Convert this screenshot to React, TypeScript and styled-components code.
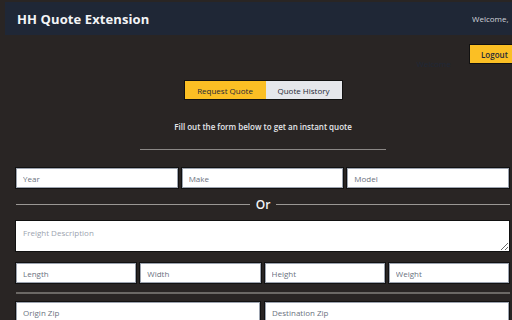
import React from "react";
import styled, { createGlobalStyle } from "styled-components";

const GlobalStyle = createGlobalStyle`
  html, body {
    margin: 0;
    padding: 0;
    background: #292524;
    overflow: hidden;
  }
  body {
    font-family: "Open Sans", "Liberation Sans", sans-serif;
  }
  * {
    box-sizing: border-box;
  }
`;

export default function App() {
  return (
    <>
      <GlobalStyle />
      <Page>
        <Header>
          <Title>HH Quote Extension</Title>
          <HeaderWelcome>Welcome,</HeaderWelcome>
        </Header>
        <TopBar>
          <GhostWelcome>Welcome</GhostWelcome>
          <LogoutButton>Logout</LogoutButton>
        </TopBar>

        <Tabs>
          <Tab active>Request Quote</Tab>
          <Tab>Quote History</Tab>
        </Tabs>

        <Intro>Fill out the form below to get an instant quote</Intro>
        <ShortRule />

        <Form>
          <Row cols={3}>
            <Field placeholder="Year" />
            <Field placeholder="Make" />
            <Field placeholder="Model" />
          </Row>

          <OrDivider>
            <Line />
            <OrText>Or</OrText>
            <Line />
          </OrDivider>

          <TextArea placeholder="Freight Description" />

          <Row cols={4} $top={10}>
            <Field placeholder="Length" />
            <Field placeholder="Width" />
            <Field placeholder="Height" />
            <Field placeholder="Weight" />
          </Row>

          <ThickRule />

          <Row cols={2} $gap={3}>
            <Field placeholder="Origin Zip" />
            <Field placeholder="Destination Zip" />
          </Row>
        </Form>
      </Page>
    </>
  );
}

const Page = styled.div`
  width: 512px;
  height: 320px;
  padding-top: 2px;
  overflow: hidden;
`;

const Header = styled.header`
  margin-left: 5px;
  height: 33px;
  background: #1f2736;
  display: flex;
  align-items: center;
  justify-content: space-between;
  padding-left: 12px;
  padding-right: 0;
`;

const Title = styled.h1`
  margin: 0;
  font-size: 13px;
  font-weight: 700;
  color: #f3f4f6;
  letter-spacing: 0.1px;
`;

const HeaderWelcome = styled.span`
  font-size: 8px;
  color: #d1d5db;
  width: 40px;
  white-space: nowrap;
  overflow: hidden;
`;

const TopBar = styled.div`
  height: 46px;
  display: flex;
  justify-content: flex-end;
  align-items: flex-start;
  padding-top: 9px;
`;

const GhostWelcome = styled.span`
  font-size: 8px;
  color: #1f2838;
  margin-top: 14px;
  margin-right: 18px;
`;

const LogoutButton = styled.button`
  width: 48px;
  height: 20px;
  background: #fbbf24;
  border: 1px solid #111;
  font-family: inherit;
  font-size: 8px;
  font-weight: 600;
  color: #1f2937;
  text-align: left;
  padding: 0 0 0 11px;
  margin-right: -5px;
`;

const Tabs = styled.div`
  margin: 0 auto;
  width: 159px;
  height: 20px;
  display: flex;
  border: 1px solid #111;
  transform: translate(7px, -1px);
`;

const Tab = styled.button<{ active?: boolean }>`
  flex: ${(p) => (p.active ? "0 0 81px" : "1")};
  border: none;
  background: ${(p) => (p.active ? "#fbbf24" : "#e5e7eb")};
  color: #1f2937;
  font-family: inherit;
  font-size: 8px;
  font-weight: 500;
  padding: 0;
`;

const Intro = styled.p`
  margin: 20px 0 0;
  text-align: center;
  padding-left: 14px;
  font-size: 8px;
  font-weight: 600;
  color: #e5e7eb;
`;

const ShortRule = styled.div`
  margin: 17px 0 0 140px;
  width: 246px;
  height: 1px;
  background: #8a8785;
`;

const Form = styled.div`
  padding: 17px 2px 0 15px;
`;

const Row = styled.div<{ cols: number; $top?: number; $gap?: number }>`
  display: grid;
  grid-template-columns: repeat(${(p) => p.cols}, 1fr);
  gap: ${(p) => p.$gap ?? 2}px;
  margin-top: ${(p) => p.$top ?? 0}px;
`;

const Field = styled.input`
  height: 22px;
  width: 100%;
  border: 1px solid #111;
  outline: 1px solid #9ca3af;
  outline-offset: -2px;
  background: #fff;
  font-family: inherit;
  font-size: 8px;
  padding: 0 7px;
  color: #111;

  &::placeholder {
    color: #6b7280;
  }
`;

const OrDivider = styled.div`
  display: flex;
  align-items: center;
  gap: 5px;
  height: 31px;
  padding: 0 0 0 1px;
`;

const Line = styled.div`
  flex: 1;
  height: 1px;
  background: #9a9794;
`;

const OrText = styled.span`
  font-size: 12px;
  font-weight: 600;
  color: #f3f4f6;
  padding: 0 1px;
`;

const TextArea = styled.textarea`
  display: block;
  width: 100%;
  height: 32px;
  border: 1px solid #111;
  background: #fff;
  font-family: inherit;
  font-size: 8px;
  padding: 6px 7px;
  resize: vertical;

  &::placeholder {
    color: #9ca3af;
  }
`;

const ThickRule = styled.div`
  margin: 8px 0 7px 1px;
  height: 2px;
  background: #6b6865;
`;
